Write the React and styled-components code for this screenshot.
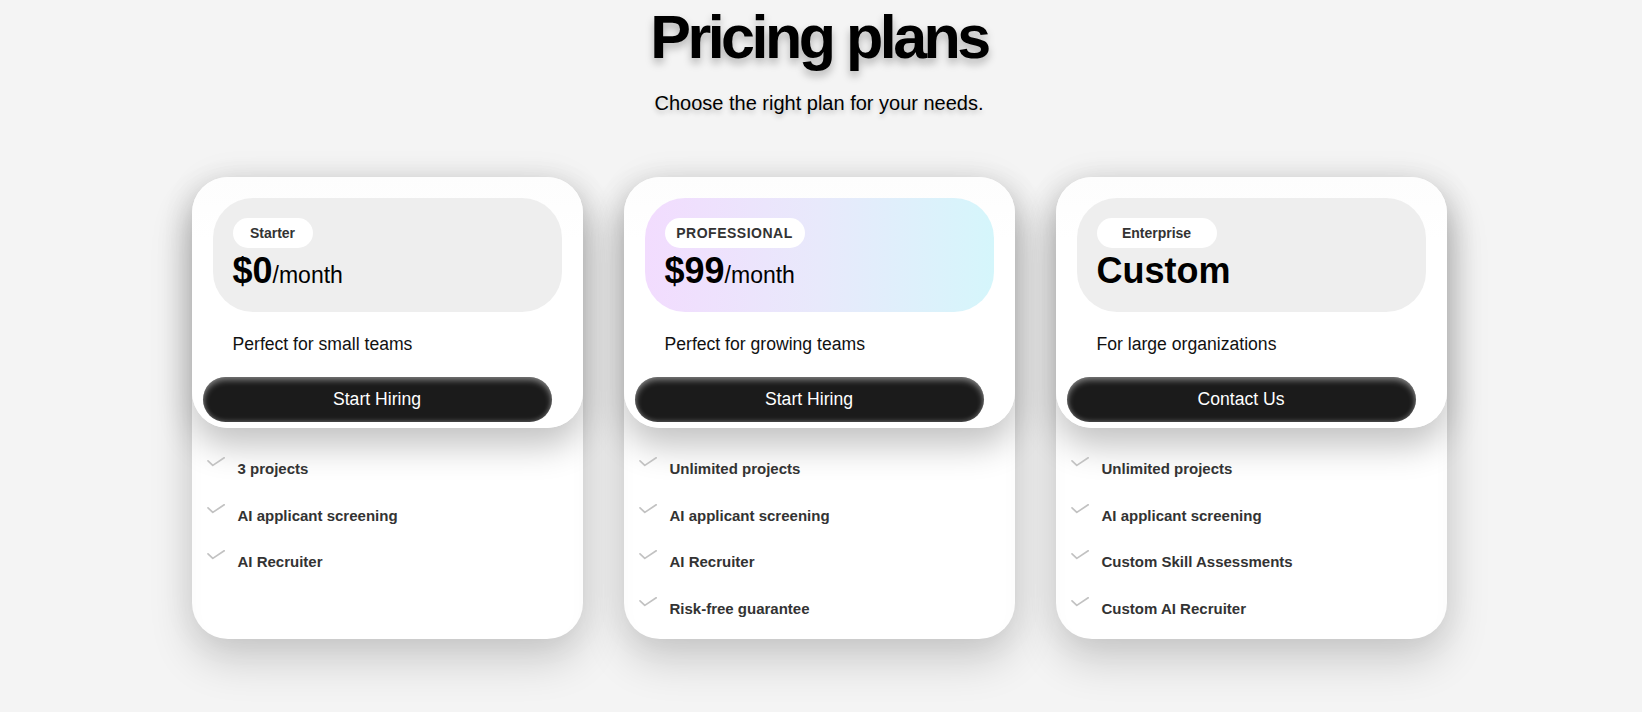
import React from 'react';
import styled, { createGlobalStyle } from 'styled-components';

const Global = createGlobalStyle`
  html, body { margin: 0; padding: 0; background: #f4f4f4; }
  body { font-family: "Liberation Sans", Arial, sans-serif; color: #000; }
`;

const Page = styled.main`
  min-height: 712px;
  box-sizing: border-box;
  padding: 2px 4px 0 0;
  display: flex;
  flex-direction: column;
  align-items: center;
`;

const Title = styled.h1`
  margin: 0;
  font-size: 61px;
  line-height: 70px;
  font-weight: 700;
  letter-spacing: -3.5px;
  color: #000;
  text-shadow: 0 5px 8px rgba(0, 0, 0, 0.28);
`;

const Subtitle = styled.p`
  margin: 20px 0 0;
  font-size: 20px;
  line-height: 23px;
  color: #000;
  text-shadow: 0 3px 5px rgba(0, 0, 0, 0.22);
`;

const Grid = styled.section`
  margin-top: 62px;
  display: grid;
  grid-template-columns: repeat(3, 391px);
  gap: 41px;
`;

const Card = styled.article`
  background: #fff;
  border-radius: 36px;
  display: flex;
  flex-direction: column;
  box-shadow: 0 22px 44px rgba(0, 0, 0, 0.16), 0 0 34px rgba(0, 0, 0, 0.07),
    inset 0 10px 18px rgba(0, 0, 0, 0.025);
`;

const Top = styled.div`
  background: linear-gradient(180deg, #fdfdfd 0%, #ffffff 25%);
  border-radius: 36px;
  padding: 21px 21px 6px;
  display: flex;
  flex-direction: column;
  box-shadow: 0 18px 34px rgba(0, 0, 0, 0.24);
`;

const Header = styled.div`
  border-radius: 40px;
  padding: 20px 20px 21px;
  background: ${(p) => p.$bg};
  display: flex;
  flex-direction: column;
  align-items: flex-start;
`;

const Pill = styled.span`
  box-sizing: border-box;
  height: 30px;
  width: ${(p) => p.$w}px;
  border-radius: 15px;
  background: #fff;
  display: flex;
  align-items: center;
  justify-content: center;
  font-size: 14px;
  font-weight: 700;
  color: #333;
  letter-spacing: ${(p) => p.$ls || 0}px;
`;

const Price = styled.div`
  margin-top: 2px;
  font-size: 36px;
  line-height: 41px;
  font-weight: 700;
  color: #000;
`;

const Per = styled.span`
  font-size: 23px;
  line-height: 1;
  font-weight: 400;
`;

const Desc = styled.p`
  margin: 22px 0 23px 20px;
  font-size: 17.6px;
  line-height: 20px;
  color: #111;
`;

const Button = styled.button`
  width: 100%;
  margin-left: -10px;
  height: 45px;
  border: none;
  border-radius: 23px;
  background: #1b1b1b;
  color: #fff;
  font-family: "Liberation Sans", Arial, sans-serif;
  font-size: 17.6px;
  cursor: pointer;
  box-shadow: inset 0 3px 6px rgba(255, 255, 255, 0.45),
    inset 0 -2px 4px rgba(255, 255, 255, 0.15);
`;

const Features = styled.ul`
  list-style: none;
  margin: 0;
  padding: 32px 20px 22px 15px;
  display: flex;
  flex-direction: column;
  gap: 29.5px;
`;

const Feature = styled.li`
  display: flex;
  align-items: flex-start;
  gap: 13px;
  font-size: 15px;
  line-height: 17px;
  font-weight: 700;
  color: #333;
`;

const CheckSvg = styled.svg`
  flex: none;
  margin-top: -3px;
`;

const Check = () => (
  <CheckSvg width="18" height="10" viewBox="0 0 18 10">
    <polyline
      points="1,3.8 5.8,8.4 17.2,0.8"
      fill="none"
      stroke="#c2c2c2"
      strokeWidth="1.7"
      strokeLinecap="round"
      strokeLinejoin="round"
    />
  </CheckSvg>
);

const plans = [
  {
    name: 'Starter',
    w: 80,
    bg: '#eeeeee',
    price: '$0',
    per: '/month',
    desc: 'Perfect for small teams',
    cta: 'Start Hiring',
    features: ['3 projects', 'AI applicant screening', 'AI Recruiter'],
  },
  {
    name: 'PROFESSIONAL',
    w: 140,
    ls: 0.5,
    bg: 'linear-gradient(90deg, #f2dcfe 0%, #e8e9fb 50%, #d5f6fb 100%)',
    price: '$99',
    per: '/month',
    desc: 'Perfect for growing teams',
    cta: 'Start Hiring',
    features: ['Unlimited projects', 'AI applicant screening', 'AI Recruiter', 'Risk-free guarantee'],
  },
  {
    name: 'Enterprise',
    w: 120,
    bg: '#eeeeee',
    price: 'Custom',
    per: '',
    desc: 'For large organizations',
    cta: 'Contact Us',
    features: ['Unlimited projects', 'AI applicant screening', 'Custom Skill Assessments', 'Custom AI Recruiter'],
  },
];

export default function App() {
  return (
    <>
      <Global />
      <Page>
        <Title>Pricing plans</Title>
        <Subtitle>Choose the right plan for your needs.</Subtitle>
        <Grid>
          {plans.map((p) => (
            <Card key={p.name}>
              <Top>
                <Header $bg={p.bg}>
                  <Pill $w={p.w} $ls={p.ls}>{p.name}</Pill>
                  <Price>
                    {p.price}
                    {p.per && <Per>{p.per}</Per>}
                  </Price>
                </Header>
                <Desc>{p.desc}</Desc>
                <Button>{p.cta}</Button>
              </Top>
              <Features>
                {p.features.map((f) => (
                  <Feature key={f}>
                    <Check />
                    <span>{f}</span>
                  </Feature>
                ))}
              </Features>
            </Card>
          ))}
        </Grid>
      </Page>
    </>
  );
}
